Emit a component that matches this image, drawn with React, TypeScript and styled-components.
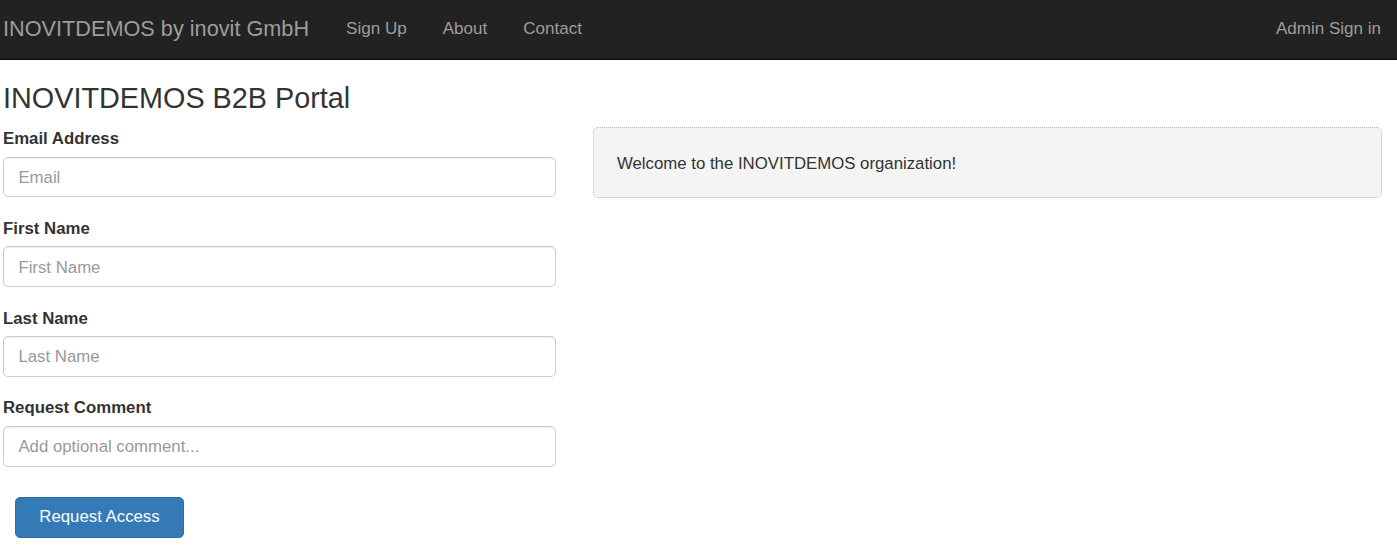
import React from "react";
import styled, { createGlobalStyle } from "styled-components";

const GlobalStyle = createGlobalStyle`
  html, body {
    margin: 0;
    padding: 0;
    background: #fff;
    font-family: "Liberation Sans", Arial, Helvetica, sans-serif;
    font-size: 16.8px;
    line-height: 24px;
    color: #333;
  }
  * { box-sizing: border-box; }
`;

const Navbar = styled.nav`
  display: flex;
  align-items: center;
  height: 60px;
  background: #222;
  border-bottom: 1px solid #080808;
  padding: 0 16px 0 3px;
`;

const Brand = styled.a`
  font-size: 21.7px;
  line-height: 24px;
  color: #9d9d9d;
  text-decoration: none;
  margin-right: 19px;
  margin-top: -2px;
`;

const NavLink = styled.a<{ $right?: boolean }>`
  font-size: 17.05px;
  line-height: 24px;
  color: #9d9d9d;
  text-decoration: none;
  padding: 0 18px;
  margin-top: -1px;
  ${(p) => (p.$right ? "margin-left: auto; padding-right: 0;" : "")}
`;

const Main = styled.main`
  padding: 0 15px 0 3px;
`;

const Title = styled.h3`
  font-size: 28.8px;
  line-height: 1.1;
  font-weight: 500;
  color: #333;
  margin: 23px 0 12.5px;
`;

const Row = styled.div`
  display: grid;
  grid-template-columns: 553px 789px;
  column-gap: 37px;
  align-items: start;
`;

const Form = styled.form`
  display: flex;
  flex-direction: column;
`;

const Group = styled.div`
  display: flex;
  flex-direction: column;
  margin-bottom: 19.4px;
`;

const Label = styled.label`
  font-weight: 700;
  font-size: 16.8px;
  line-height: 24px;
  margin-bottom: 5.5px;
`;

const Input = styled.input`
  height: 40.8px;
  width: 100%;
  padding: 8px 14.4px 6px;
  font-family: inherit;
  font-size: 16.8px;
  color: #555;
  background: #fff;
  border: 1px solid #ccc;
  border-radius: 5px;
  box-shadow: inset 0 1px 1px rgba(0, 0, 0, 0.075);
  outline: none;
  &::placeholder { color: #999; }
`;

const Button = styled.button`
  align-self: flex-start;
  margin: 11px 0 0 12px;
  height: 41px;
  width: 169px;
  padding: 0;
  font-family: inherit;
  font-size: 16.8px;
  color: #fff;
  background: #337ab7;
  border: 1px solid #2e6da4;
  border-radius: 5px;
  cursor: pointer;
`;

const Well = styled.div`
  min-height: 71px;
  padding: 24px 23px 20px;
  background: #f4f4f4;
  border: 1px dotted #bdbdbd;
  border-radius: 5px;
  font-size: 16.8px;
  line-height: 24px;
  color: #333;
`;

const fields = [
  { label: "Email Address", placeholder: "Email", type: "email" },
  { label: "First Name", placeholder: "First Name", type: "text" },
  { label: "Last Name", placeholder: "Last Name", type: "text" },
  { label: "Request Comment", placeholder: "Add optional comment...", type: "text" },
];

export default function App() {
  return (
    <>
      <GlobalStyle />
      <Navbar>
        <Brand href="#">INOVITDEMOS by inovit GmbH</Brand>
        <NavLink href="#">Sign Up</NavLink>
        <NavLink href="#">About</NavLink>
        <NavLink href="#">Contact</NavLink>
        <NavLink href="#" $right>Admin Sign in</NavLink>
      </Navbar>
      <Main>
        <Title>INOVITDEMOS B2B Portal</Title>
        <Row>
          <Form onSubmit={(e) => e.preventDefault()}>
            {fields.map((f) => (
              <Group key={f.label}>
                <Label>{f.label}</Label>
                <Input type={f.type} placeholder={f.placeholder} />
              </Group>
            ))}
            <Button type="submit">Request Access</Button>
          </Form>
          <Well>Welcome to the INOVITDEMOS organization!</Well>
        </Row>
      </Main>
    </>
  );
}
